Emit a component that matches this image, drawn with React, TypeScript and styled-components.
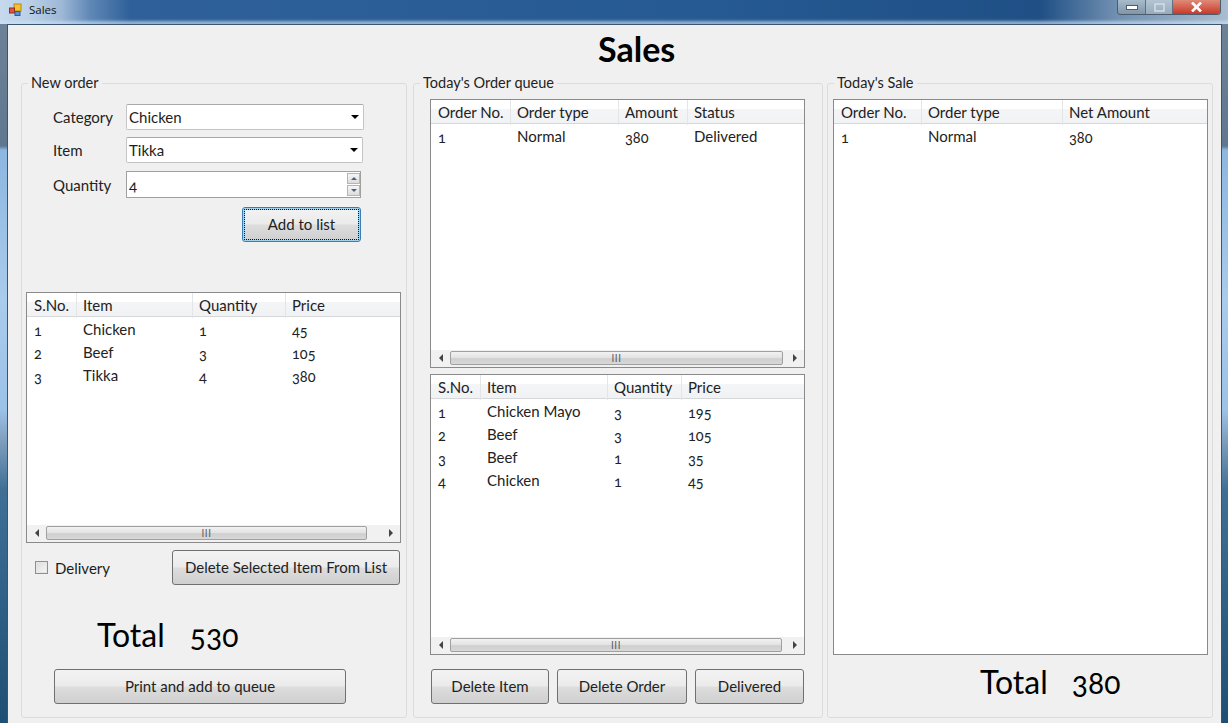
import { createGlobalStyle } from "styled-components";
import styled from "styled-components";

const GlobalStyle = createGlobalStyle`
  html, body {
    margin: 0;
    padding: 0;
    background: #2a5f97;
  }
  * {
    box-sizing: border-box;
  }
`;

const uiFont = `"Lato", "Open Sans", "Liberation Sans", sans-serif`;

const Win = styled.div`
  width: 1228px;
  height: 723px;
  overflow: hidden;
  display: flex;
  flex-direction: column;
  background: linear-gradient(
    180deg,
    #6f8499 0px,
    #5f7890 146px,
    #8db7e0 150px,
    #a9cbec 300px,
    #9cc2e8 410px,
    #7f9fbe 440px,
    #3f6f95 490px,
    #1f4f73 723px
  );
  font-family: ${uiFont};
  font-variant-numeric: oldstyle-nums;
  color: #1c1c1c;
`;
const TitleBar = styled.div`
  height: 24px;
  flex: none;
  display: flex;
  align-items: flex-start;
  justify-content: space-between;
  padding: 3px 7px 0 9px;
  background: linear-gradient(
    90deg,
    #c6d9ed 0px,
    #bcd1e8 28px,
    #9db7d6 62px,
    #5f88b6 90px,
    #2f6099 130px,
    #265a93 700px,
    #1f4f85 1040px,
    #6f8fb0 1115px,
    #a9bccf 1228px
  );
  box-shadow: inset 0 -4px 3px -1px rgba(205, 226, 244, 0.65);
`;
const TitleLeft = styled.div`
  display: flex;
  align-items: center;
  gap: 7px;
  font-family: "Open Sans", sans-serif;
  font-size: 11.5px;
  line-height: 13px;
  color: #111;
`;
const WinButtons = styled.div`
  display: flex;
  height: 15px;
  margin-top: -3px;
  border: 1px solid #4a5c6e;
  border-top: none;
  border-radius: 0 0 4px 4px;
  overflow: hidden;
`;
const WinBtn = styled.div<{ $w: number; $bg: string }>`
  width: ${(p) => p.$w}px;
  display: flex;
  align-items: center;
  justify-content: center;
  background: ${(p) => p.$bg};
  border-right: 1px solid #5d7185;
  &:last-child {
    border-right: none;
  }
`;
const Client = styled.div`
  flex: 1;
  margin: 0 6px 0 7px;
  border: 1px solid #3b5570;
  border-bottom: none;
  background: #f0f0f0;
  padding: 0 0 0 13px;
`;
const Title = styled.h1`
  margin: 0;
  height: 50px;
  padding: 6px 0 0 577px;
  font-size: 34px;
  line-height: 36px;
  font-weight: 700;
  color: #000;
`;
const Columns = styled.div`
  display: flex;
`;
const Group = styled.fieldset<{ $w: number; $gap: number }>`
  width: ${(p) => p.$w}px;
  height: 643px;
  margin: 0 ${(p) => p.$gap}px 0 0;
  padding: 0;
  min-width: 0;
  border: 1px solid #dcdcdc;
  border-radius: 3px;
`;
const Legend = styled.legend`
  margin-left: 6px;
  padding: 0 3px;
  font-size: 14.5px;
  line-height: 16px;
  color: #222;
`;
const FormGrid = styled.div`
  display: grid;
  grid-template-columns: 73px 237px;
  row-gap: 7px;
  margin: 13px 0 0 31px;
  align-items: center;
`;
const Label = styled.span`
  font-size: 15px;
  padding-bottom: 1px;
  color: #222;
`;
const QtyLabel = styled(Label)`
  margin-top: 2px;
`;
const Combo = styled.div<{ $w: number }>`
  width: ${(p) => p.$w}px;
  height: 26px;
  display: flex;
  align-items: center;
  justify-content: space-between;
  padding: 0 4px 1px 2px;
  background: #fff;
  border: 1px solid #c4c4c4;
  border-top-color: #a8a8a8;
  border-radius: 2px;
  font-size: 15px;
`;
const Spin = styled.div`
  width: 235px;
  height: 27px;
  margin-top: 1px;
  display: flex;
  align-items: center;
  justify-content: space-between;
  padding: 0 0 0 2px;
  background: #fff;
  border: 1px solid #a0a0a0;
  font-size: 15px;
`;
const SpinBtns = styled.div`
  display: flex;
  flex-direction: column;
  gap: 1px;
`;
const SpinBtn = styled.div`
  width: 13px;
  height: 11px;
  display: flex;
  align-items: center;
  justify-content: center;
  border: 1px solid #b5b5b5;
  background: linear-gradient(180deg, #f6f6f6, #dcdcdc);
`;
const Button = styled.div<{ $w: number; $focus?: boolean }>`
  width: ${(p) => p.$w}px;
  height: 35px;
  flex: none;
  display: flex;
  align-items: center;
  justify-content: center;
  padding-bottom: 1px;
  border: 1px solid ${(p) => (p.$focus ? "#3a7fb0" : "#707070")};
  border-radius: 3px;
  font-size: 15px;
  color: #222;
  background: linear-gradient(180deg, #f3f3f3 0%, #ebebeb 48%, #dddddd 52%, #cfcfcf 100%);
  outline: ${(p) => (p.$focus ? "1px dotted #111" : "none")};
  outline-offset: -3px;
  box-shadow: ${(p) => (p.$focus ? "inset 0 0 0 2px #9fd3ee" : "none")};
`;
const AddRow = styled.div`
  margin: 9px 0 0 220px;
`;
const ListBox = styled.div<{ $h: number; $left: number; $top?: number }>`
  width: 375px;
  height: ${(p) => p.$h}px;
  margin: ${(p) => p.$top ?? 0}px 0 0 ${(p) => p.$left}px;
  display: flex;
  flex-direction: column;
  background: #fff;
  border: 1px solid #8a8a8a;
`;
const ListHead = styled.div<{ $cols: string }>`
  height: 24px;
  flex: none;
  display: grid;
  grid-template-columns: ${(p) => p.$cols};
  background: linear-gradient(180deg, #fff 0%, #fff 40%, #f3f5f7 41%, #f1f2f4 100%);
  border-bottom: 1px solid #d5d7d9;
`;
const HeadCell = styled.div`
  padding-left: 7px;
  font-size: 15px;
  line-height: 25px;
  color: #222;
  white-space: nowrap;
  & + & {
    padding-left: 6px;
    border-left: 1px solid #e3e5e7;
  }
`;
const ListBody = styled.div`
  flex: 1;
  min-height: 0;
  padding-top: 1px;
`;
const ListRow = styled.div<{ $cols: string }>`
  height: 23px;
  display: grid;
  grid-template-columns: ${(p) => p.$cols};
`;
const Cell = styled.div<{ $num: boolean }>`
  padding: ${(p) => (p.$num ? "1px" : "0")} 0 0 7px;
  font-size: ${(p) => (p.$num ? "14.5px" : "15px")};
  line-height: 23px;
  color: #222;
  white-space: nowrap;
`;
const ScrollBar = styled.div`
  height: 17px;
  flex: none;
  display: flex;
  align-items: flex-start;
  padding-top: 1px;
  background: #f1f1f1;
`;
const ScrollArrow = styled.div`
  width: 19px;
  height: 14px;
  flex: none;
  display: flex;
  align-items: center;
  justify-content: center;
`;
const ScrollTrack = styled.div`
  flex: 1;
`;
const ScrollThumb = styled.div<{ $w: number }>`
  width: ${(p) => p.$w}px;
  height: 14px;
  display: flex;
  align-items: center;
  justify-content: center;
  border: 1px solid #a0a0a0;
  border-radius: 2px;
  background: linear-gradient(180deg, #f2f2f2 0%, #e2e2e2 50%, #cfcfcf 55%, #d8d8d8 100%);
  font-family: "Liberation Sans", sans-serif;
  font-size: 10px;
  color: #555;
  letter-spacing: 0.5px;
`;
const DeleteRow = styled.div`
  display: flex;
  align-items: center;
  justify-content: space-between;
  width: 365px;
  margin: 7px 0 0 13px;
`;
const CheckWrap = styled.div`
  display: flex;
  align-items: center;
  gap: 7px;
  font-size: 15px;
`;
const CheckBox = styled.div`
  width: 13px;
  height: 13px;
  border: 1px solid #8e8f8f;
  background: linear-gradient(135deg, #dcdcdc, #f6f6f6);
  box-shadow: inset 0 0 0 1px #e6e6e6;
`;
const TotalRow = styled.div<{ $left: number; $h: number; $top: number; $gap: number }>`
  height: ${(p) => p.$h}px;
  display: flex;
  align-items: baseline;
  gap: ${(p) => p.$gap}px;
  padding: ${(p) => p.$top}px 0 0 ${(p) => p.$left}px;
  font-size: 32px;
  line-height: 40px;
  color: #000;
`;
const TotalValue = styled.span`
  font-size: 30px;
`;
const PrintRow = styled.div`
  margin-left: 32px;
`;
const QueueButtons = styled.div`
  display: flex;
  gap: 8px;
  margin: 14px 0 0 17px;
`;

const Triangle = ({ dir, color = "#000", size = 8 }: { dir: "up" | "down" | "left" | "right"; color?: string; size?: number }) => {
  const pts = {
    up: "0,4 4,0 8,4",
    down: "0,0 8,0 4,4",
    left: "4,0 4,8 0,4",
    right: "0,0 0,8 4,4",
  }[dir];
  const vertical = dir === "up" || dir === "down";
  return (
    <svg width={vertical ? size : size / 2} height={vertical ? size / 2 : size} viewBox={vertical ? "0 0 8 4" : "0 0 4 8"}>
      <polygon points={pts} fill={color} />
    </svg>
  );
};

interface IListProps {
  cols: string;
  heads: string[];
  rows: string[][];
  h: number;
  left: number;
  top?: number;
  thumb?: number;
}

function DataList({ cols, heads, rows, h, left, top, thumb }: IListProps) {
  return (
    <ListBox $h={h} $left={left} $top={top}>
      <ListHead $cols={cols}>
        {heads.map((head) => (
          <HeadCell key={head}>{head}</HeadCell>
        ))}
      </ListHead>
      <ListBody>
        {rows.map((row) => (
          <ListRow $cols={cols} key={row[0]}>
            {row.map((val, i) => (
              <Cell key={i} $num={/^\d+$/.test(val)}>
                {val}
              </Cell>
            ))}
          </ListRow>
        ))}
      </ListBody>
      {thumb && (
        <ScrollBar>
          <ScrollArrow>
            <Triangle dir="left" color="#444" />
          </ScrollArrow>
          <ScrollThumb $w={thumb}>III</ScrollThumb>
          <ScrollTrack />
          <ScrollArrow>
            <Triangle dir="right" color="#444" />
          </ScrollArrow>
        </ScrollBar>
      )}
    </ListBox>
  );
}

export default function App() {
  return (
    <>
      <GlobalStyle />
      <Win>
        <TitleBar>
          <TitleLeft>
            <svg width="13" height="13" viewBox="0 0 13 13">
              <rect x="5" y="1" width="7" height="7" fill="#f2c230" stroke="#b98a10" />
              <rect x="0.5" y="5" width="5" height="5" fill="#e0533c" stroke="#9a2e1e" />
              <rect x="6" y="8.5" width="5" height="4" fill="#5a8fd0" stroke="#2d5c9c" />
            </svg>
            Sales
          </TitleLeft>
          <WinButtons>
            <WinBtn $w={28} $bg="linear-gradient(180deg,#a9bccc,#7f95a9)">
              <svg width="12" height="5" viewBox="0 0 12 5">
                <rect x="0.5" y="0.5" width="11" height="4" fill="#fff" stroke="#4a5c6e" />
              </svg>
            </WinBtn>
            <WinBtn $w={27} $bg="linear-gradient(180deg,#b4c4d2,#98aabb)">
              <svg width="11" height="9" viewBox="0 0 11 9">
                <rect x="1" y="1" width="9" height="7" fill="none" stroke="#d4dee8" strokeWidth="1.5" />
              </svg>
            </WinBtn>
            <WinBtn $w={47} $bg="linear-gradient(180deg,#e08a78,#c8392a)">
              <svg width="13" height="10" viewBox="0 0 13 10">
                <path d="M2 0.5 L11 9.5 M11 0.5 L2 9.5" stroke="#fff" strokeWidth="2.6" />
              </svg>
            </WinBtn>
          </WinButtons>
        </TitleBar>
        <Client>
          <Title>Sales</Title>
          <Columns>
            <Group $w={386} $gap={6}>
              <Legend>New order</Legend>
              <FormGrid>
                <Label>Category</Label>
                <Combo $w={238}>
                  Chicken
                  <Triangle dir="down" />
                </Combo>
                <Label>Item</Label>
                <Combo $w={237}>
                  Tikka
                  <Triangle dir="down" />
                </Combo>
                <QtyLabel>Quantity</QtyLabel>
                <Spin>
                  4
                  <SpinBtns>
                    <SpinBtn>
                      <Triangle dir="up" color="#50607a" size={6} />
                    </SpinBtn>
                    <SpinBtn>
                      <Triangle dir="down" color="#50607a" size={6} />
                    </SpinBtn>
                  </SpinBtns>
                </Spin>
              </FormGrid>
              <AddRow>
                <Button $w={119} $focus>
                  Add to list
                </Button>
              </AddRow>
              <DataList
                cols="49px 116px 93px 1fr"
                heads={["S.No.", "Item", "Quantity", "Price"]}
                rows={[
                  ["1", "Chicken", "1", "45"],
                  ["2", "Beef", "3", "105"],
                  ["3", "Tikka", "4", "380"],
                ]}
                h={251}
                left={4}
                top={50}
                thumb={321}
              />
              <DeleteRow>
                <CheckWrap>
                  <CheckBox />
                  Delivery
                </CheckWrap>
                <Button $w={228}>Delete Selected Item From List</Button>
              </DeleteRow>
              <TotalRow $left={75} $h={84} $top={30} $gap={25}>
                <span>Total</span>
                <TotalValue>530</TotalValue>
              </TotalRow>
              <PrintRow>
                <Button $w={292}>Print and add to queue</Button>
              </PrintRow>
            </Group>
            <Group $w={410} $gap={4}>
              <Legend>Today's Order queue</Legend>
              <DataList
                cols="79px 108px 69px 1fr"
                heads={["Order No.", "Order type", "Amount", "Status"]}
                rows={[["1", "Normal", "380", "Delivered"]]}
                h={269}
                left={16}
                top={8}
                thumb={333}
              />
              <DataList
                cols="49px 127px 74px 1fr"
                heads={["S.No.", "Item", "Quantity", "Price"]}
                rows={[
                  ["1", "Chicken Mayo", "3", "195"],
                  ["2", "Beef", "3", "105"],
                  ["3", "Beef", "1", "35"],
                  ["4", "Chicken", "1", "45"],
                ]}
                h={281}
                left={16}
                top={6}
                thumb={332}
              />
              <QueueButtons>
                <Button $w={118}>Delete Item</Button>
                <Button $w={130}>Delete Order</Button>
                <Button $w={109}>Delivered</Button>
              </QueueButtons>
            </Group>
            <Group $w={386} $gap={0}>
              <Legend>Today's Sale</Legend>
              <DataList
                cols="87px 141px 1fr"
                heads={["Order No.", "Order type", "Net Amount"]}
                rows={[["1", "Normal", "380"]]}
                h={556}
                left={5}
                top={8}
              />
              <TotalRow $left={152} $h={56} $top={7} $gap={24}>
                <span>Total</span>
                <TotalValue>380</TotalValue>
              </TotalRow>
            </Group>
          </Columns>
        </Client>
      </Win>
    </>
  );
}
